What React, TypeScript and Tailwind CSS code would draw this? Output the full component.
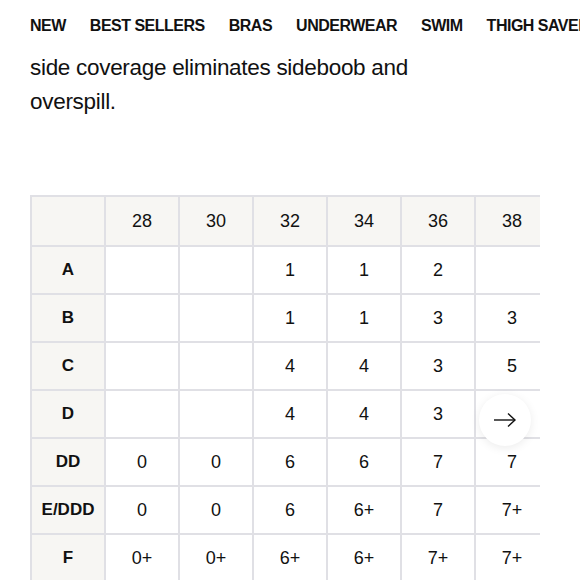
const cols = ["28", "30", "32", "34", "36", "38"];
const rows: [string, string[]][] = [
  ["A", ["", "", "1", "1", "2", ""]],
  ["B", ["", "", "1", "1", "3", "3"]],
  ["C", ["", "", "4", "4", "3", "5"]],
  ["D", ["", "", "4", "4", "3", ""]],
  ["DD", ["0", "0", "6", "6", "7", "7"]],
  ["E/DDD", ["0", "0", "6", "6+", "7", "7+"]],
  ["F", ["0+", "0+", "6+", "6+", "7+", "7+"]],
];

const nav = ["NEW", "BEST SELLERS", "BRAS", "UNDERWEAR", "SWIM", "THIGH SAVERS"];

export default function App() {
  return (
    <div
      className="h-[580px] w-[580px] overflow-hidden bg-white text-[#111]"
      style={{ fontFamily: '"Liberation Sans", Arial, sans-serif' }}
    >
      {/* Nav */}
      <nav className="flex gap-6 whitespace-nowrap pl-[30px] pt-[14px] text-[16px] font-semibold tracking-[-0.5px]">
        {nav.map((n) => (
          <span key={n}>{n}</span>
        ))}
      </nav>

      {/* Copy */}
      <p className="mt-[13px] pl-[30px] text-[22.5px] leading-[34px] tracking-[-0.3px]">
        side coverage eliminates sideboob and
        <br />
        overspill.
      </p>

      {/* Size chart */}
      <div className="relative ml-[30px] mt-[76px] w-[510px] overflow-hidden">
        <table className="border-collapse text-center text-[18px]">
          <thead>
            <tr className="h-[50px] bg-[#f7f6f3]">
              <th className="w-[74px] min-w-[74px] border-2 border-[#e0e0e5]" />
              {cols.map((c) => (
                <th
                  key={c}
                  className="w-[74px] min-w-[74px] border-2 border-[#e0e0e5] font-normal"
                >
                  {c}
                </th>
              ))}
            </tr>
          </thead>
          <tbody>
            {rows.map(([label, vals]) => (
              <tr key={label} className="h-[48px]">
                <td className="border-2 border-[#e0e0e5] bg-[#f7f6f3] text-[17px] font-semibold">
                  {label}
                </td>
                {vals.map((v, i) => (
                  <td key={i} className="border-2 border-[#e0e0e5]">
                    {v}
                  </td>
                ))}
              </tr>
            ))}
          </tbody>
        </table>
        <button className="absolute left-[449px] top-[199px] flex h-[52px] w-[52px] items-center justify-center rounded-full bg-white shadow-[0_2px_10px_rgba(0,0,0,0.08)]">
          <svg width="24" height="16" viewBox="0 0 24 16" fill="none" stroke="#111" strokeWidth="1.4">
            <path d="M1 8h21" />
            <path d="M15 1.5l7 6.5-7 6.5" />
          </svg>
        </button>
      </div>
    </div>
  );
}
